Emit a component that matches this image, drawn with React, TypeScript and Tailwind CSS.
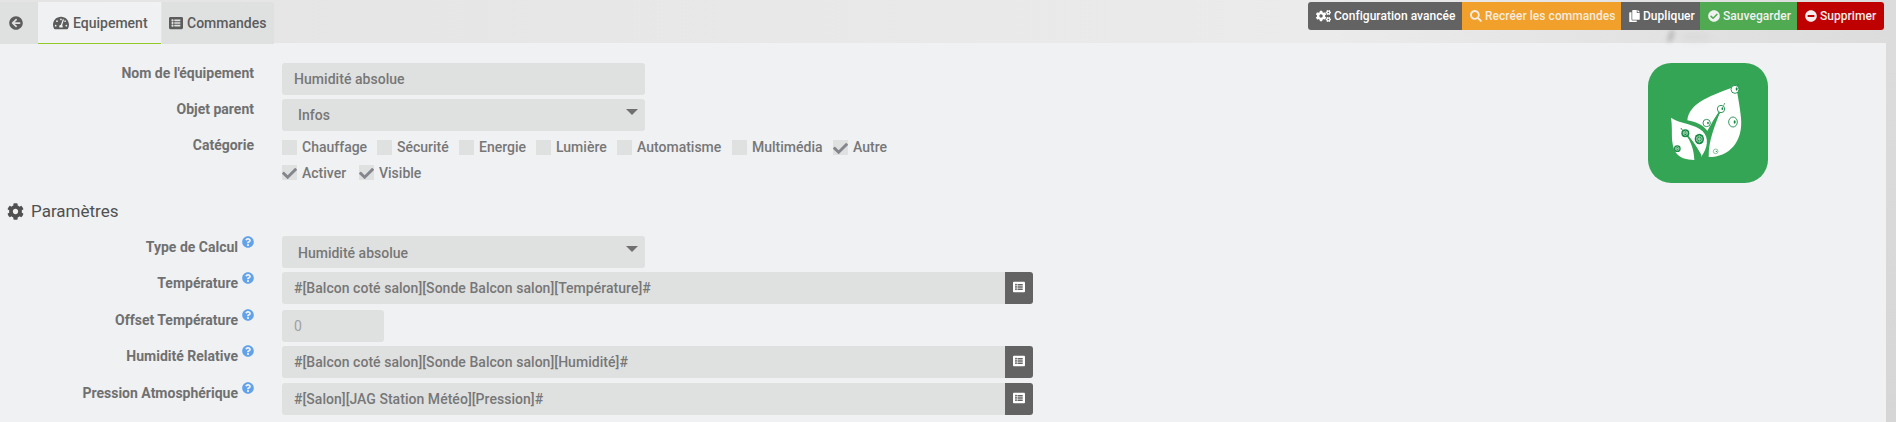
import type { ReactNode } from "react";
import {
  FaArrowCircleLeft,
  FaCheck,
  FaCheckCircle,
  FaCog,
  FaCogs,
  FaCopy,
  FaListAlt,
  FaMinusCircle,
  FaQuestionCircle,
  FaSearch,
  FaTachometerAlt,
} from "react-icons/fa";

function Row({ label, help, className, labelClass = "", children }: { label: string; help?: boolean; className: string; labelClass?: string; children: ReactNode }) {
  return (
    <div className={`flex items-start ${className}`}>
      <div className={`mr-7 flex w-[254px] shrink-0 items-start justify-end text-sm leading-5 font-bold text-[#707070] ${labelClass}`}>
        <span>{label}</span>
        {help && <FaQuestionCircle className="-mt-px ml-1 size-3 text-[#62a2ea]" />}
      </div>
      {children}
    </div>
  );
}

function Select({ value, textClass }: { value: string; textClass: string }) {
  return (
    <div className="flex h-8 w-[363px] items-start justify-between rounded-[3px] bg-[#dfe1e0] pr-[7px] pl-4">
      <span className={textClass}>{value}</span>
      <svg className="mt-2.5 h-1.5 w-3" viewBox="0 0 12 6">
        <path d="M0 0h12L6 6z" fill="#707070" />
      </svg>
    </div>
  );
}

function CommandInput({ value }: { value: string }) {
  return (
    <div className="flex h-8">
      <div className="w-[723px] rounded-l-[3px] bg-[#dfe1e0] pl-3 leading-[33px] tracking-[0.04px]">{value}</div>
      <button className="flex w-7 justify-center rounded-r-[3px] bg-[#636363] pt-[9px] text-white">
        <FaListAlt className="size-3" />
      </button>
    </div>
  );
}

function Check({ label, checked, className, textClass = "-mt-px" }: { label: string; checked?: boolean; className: string; textClass?: string }) {
  return (
    <label className={`flex h-[15px] items-center ${className}`}>
      <span className="mr-[5px] flex size-[15px] shrink-0 items-center bg-[#dfe1e0]">
        {checked && <FaCheck className="mt-px size-[15px] shrink-0 text-[#85858d]" />}
      </span>
      <span className={textClass}>{label}</span>
    </label>
  );
}

function LeafLogo() {
  return (
    <svg className="size-[120px]" viewBox="84 39 360 360">
      <rect x="84" y="39" width="360" height="360" rx="70" fill="#34a554" />
      <path d="M202 211C207 165 252 143 349 108C352 134 359 163 363 203C370 277 326 321 266 321C266 267 285 229 303 178C284 202 278 226 263 244C249 224 229 216 202 211Z" fill="#fff" />
      <path d="M153 203C178 221 228 222 248 244C268 264 263 294 244 320C232 299 221 273 198 252C213 278 222 298 223 330C174 329 160 309 156 268C155 248 157 228 153 203Z" fill="#fff" />
      <path d="M303 180Q281 212 264 244M197 252Q221 277 243 318" fill="none" stroke="#34a554" strokeWidth="5" />
      <g fill="#fff" stroke="#168943" strokeWidth="2.6">
        <circle cx="345" cy="118" r="12" />
        <circle cx="303" cy="177" r="11" />
        <circle cx="260" cy="219" r="11" />
        <ellipse cx="339" cy="216" rx="13" ry="15" />
        <circle cx="287" cy="304" r="7" strokeWidth="1.5" />
      </g>
      <g fill="#168943">
        <ellipse cx="350" cy="117" rx="3" ry="5" />
        <ellipse cx="307" cy="176" rx="2.5" ry="4" />
        <ellipse cx="264" cy="219" rx="2.5" ry="4" />
        <ellipse cx="344" cy="216" rx="3" ry="5" />
        <circle cx="289" cy="304" r="2" />
        <ellipse cx="238" cy="267" rx="14" ry="16" />
        <circle cx="196" cy="250" r="12" />
        <circle cx="172" cy="296" r="10" />
      </g>
      <g fill="none" stroke="#a9d8b7" strokeWidth="2.4">
        <path d="M238 257l8 5v10l-8 5-8-5v-10zM230 262l16 10M246 262l-16 10M238 257v20" />
        <path d="M196 243l6 3v7l-6 4-6-4v-7zM190 246l12 7M202 246l-12 7" />
        <path d="M172 290l5 3v6l-5 3-5-3v-6zM167 293l10 6M177 293l-10 6" />
      </g>
      <path d="M353 108l2-6M311 167l3-8M189 241l-6-6M184 234v5" stroke="#168943" strokeWidth="2" fill="none" />
    </svg>
  );
}

export default function App() {
  return (
    <div className="flex h-[422px] w-[1896px] flex-col overflow-hidden bg-[#e6e6e6] font-['Roboto',sans-serif] text-sm font-medium text-[#777]">
      <header className="relative flex h-[43px] shrink-0 items-start justify-between bg-linear-to-r from-[#e4e4e4] via-[#ebebeb] via-70% to-[#dcdcdc] pt-0.5 pr-3">
        <div className="absolute top-[30px] left-[1668px] h-3 w-[6px] -skew-x-12 rounded-full bg-[#a8a8a8] opacity-60 blur-[2px]" />
        <div className="absolute top-[33px] left-[1682px] h-2 w-7 rounded-full bg-[#d6d6d6] opacity-60 blur-[3px]" />
        <nav className="z-10 flex h-[42px] text-[#5c5c5c]">
          <a className="flex w-[38px] items-center bg-[#dfe1e0] pl-[9px]">
            <FaArrowCircleLeft className="size-3.5" />
          </a>
          <a className="mr-px flex w-[123px] items-center border-b border-[#94ca25] bg-[#eff1f3] pl-[15px]">
            <FaTachometerAlt className="mr-1 size-4" />
            <span>Equipement</span>
          </a>
          <a className="flex w-28 items-center rounded-tr-[3px] bg-[#dfe1e0] pl-[7px]">
            <FaListAlt className="mr-1 size-3.5" />
            <span>Commandes</span>
          </a>
        </nav>
        <div className="z-10 flex h-7 text-xs tracking-[0.04px] text-white">
          <button className="flex w-[154px] items-center rounded-l-[3px] bg-[#636363] pb-px pl-2">
            <FaCogs className="mr-[3px] h-3 w-[15px]" />
            <span>Configuration avancée</span>
          </button>
          <button className="flex w-[159px] items-center bg-[#f0a02b] pb-px pl-2 text-[#f5ecdf]">
            <FaSearch className="mr-[3px] size-3" />
            <span>Recréer les commandes</span>
          </button>
          <button className="flex w-[79px] items-center bg-[#636363] pb-px pl-2">
            <FaCopy className="mr-[3px] h-3 w-[11px]" />
            <span>Dupliquer</span>
          </button>
          <button className="flex w-[97px] items-center bg-[#50aa51] pb-px pl-2 text-[#f0f1f0]">
            <FaCheckCircle className="mr-[3px] size-3" />
            <span>Sauvegarder</span>
          </button>
          <button className="flex w-[87px] items-center rounded-r-[3px] bg-[#be0000] pb-px pl-2 text-[#f4eded]">
            <FaMinusCircle className="mr-[3px] size-3" />
            <span>Supprimer</span>
          </button>
        </div>
      </header>

      <div className="flex grow bg-linear-to-b from-[#dcdcdc] to-[#d6d6d6]">
        <main className="flex w-[1886px] items-start justify-between bg-[#eff1f3] pt-5 pr-[118px]">
          <div>
            <Row label="Nom de l'équipement" className="h-9">
              <div className="h-8 w-[363px] rounded-[3px] bg-[#dfe1e0] pl-3 leading-8 tracking-[0.04px]">Humidité absolue</div>
            </Row>
            <Row label="Objet parent" className="h-9">
              <Select value="Infos" textClass="leading-8" />
            </Row>
            <Row label="Catégorie" className="h-[60px]">
              <div className="flex flex-col gap-2.5 pt-[5px]">
                <div className="flex">
                  <Check label="Chauffage" className="w-[95px]" />
                  <Check label="Sécurité" className="w-[82px]" />
                  <Check label="Energie" className="w-[77px]" />
                  <Check label="Lumière" className="w-[81px]" />
                  <Check label="Automatisme" className="w-[115px]" />
                  <Check label="Multimédia" className="w-[101px]" />
                  <Check label="Autre" checked className="w-20" />
                </div>
                <div className="flex">
                  <Check label="Activer" checked className="w-[77px]" textClass="pt-px" />
                  <Check label="Visible" checked className="w-20" textClass="pt-px" />
                </div>
              </div>
            </Row>
            <h2 className="flex h-[41px] items-start pl-[7px] text-[17px] leading-8 font-normal text-[#505050]">
              <FaCog className="mt-2 mr-[7px] size-[17px]" />
              <span>Paramètres</span>
            </h2>
            <Row label="Type de Calcul" help className="h-9" labelClass="pt-px">
              <Select value="Humidité absolue" textClass="pt-px leading-8" />
            </Row>
            <Row label="Température" help className="h-[38px]" labelClass="pt-px">
              <CommandInput value="#[Balcon coté salon][Sonde Balcon salon][Température]#" />
            </Row>
            <Row label="Offset Température" help className="h-9">
              <div className="h-8 w-[102px] rounded-[3px] bg-[#dfe1e0] pl-3 leading-8 font-normal text-[#a0a0a0]">0</div>
            </Row>
            <Row label="Humidité Relative" help className="h-[37px]">
              <CommandInput value="#[Balcon coté salon][Sonde Balcon salon][Humidité]#" />
            </Row>
            <Row label="Pression Atmosphérique" help className="h-8">
              <CommandInput value="#[Salon][JAG Station Météo][Pression]#" />
            </Row>
          </div>
          <LeafLogo />
        </main>
      </div>
    </div>
  );
}
